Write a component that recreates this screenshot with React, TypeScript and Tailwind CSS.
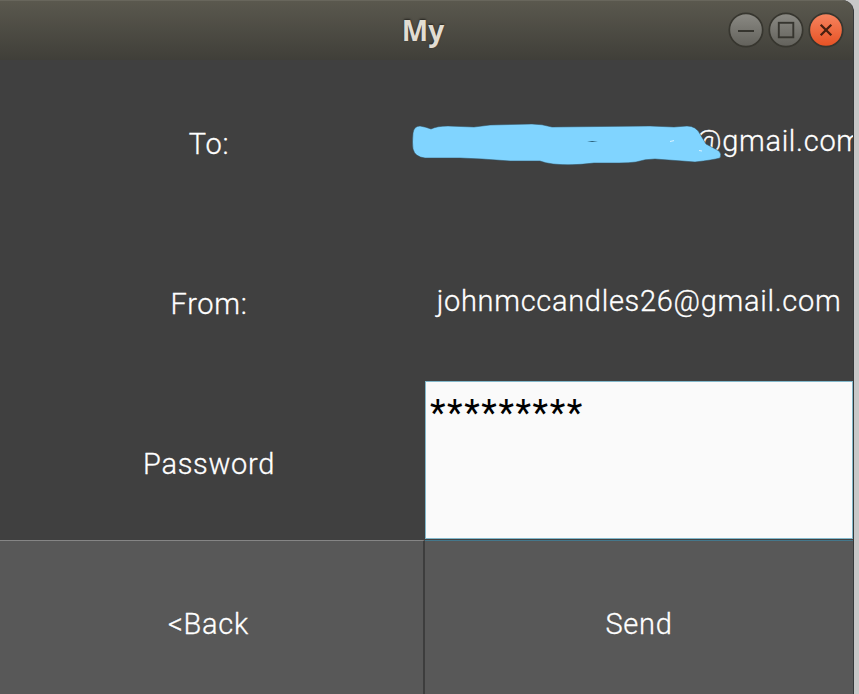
import React from "react";

function WindowButton({ kind }: { kind: "min" | "max" | "close" }) {
  const close = kind === "close";
  return (
    <svg className="h-9 w-9" viewBox="0 0 36 36" fill="none">
      <defs>
        <linearGradient id={kind} x1="0" y1="0" x2="0" y2="1">
          <stop stopColor={close ? "#f78560" : "#8b8a84"} />
          <stop offset="1" stopColor={close ? "#e65123" : "#62615b"} />
        </linearGradient>
      </defs>
      <circle cx="18" cy="18" r="16.7" fill={`url(#${kind})`} stroke="#37362f" strokeWidth="1.7" />
      {kind === "min" && <path d="M10 19H26" stroke="#36352f" strokeWidth="2" />}
      {kind === "max" && <rect x="10.8" y="10.8" width="14.5" height="14.5" stroke="#36352f" strokeWidth="1.9" />}
      {close && <path d="M12.7 12.7L23.3 23.3M23.3 12.7L12.7 23.3" stroke="#482010" strokeWidth="2.3" />}
    </svg>
  );
}

function Label({ children }: { children: React.ReactNode }) {
  return <div className="flex items-center justify-center pt-2.5 pr-[7px]">{children}</div>;
}

export default function App() {
  return (
    <div className="h-[694px] w-[859px] overflow-hidden bg-[#c8c8c8] font-['Roboto',sans-serif] text-[29px] font-light tracking-[0.7px] text-white">
      <div className="flex h-full w-[854px] flex-col overflow-hidden rounded-tr-[12px] border-r border-[#35393a] bg-[#404040]">
        <header className="grid h-[60px] shrink-0 grid-cols-[1fr_auto_1fr] items-center border-t border-[#68665c] bg-gradient-to-b from-[#5a584e] to-[#403f39] pr-[9px] pb-[2px]">
          <span />
          <h1 className="ml-[2px] font-['Noto_Sans',sans-serif] text-[28px] leading-9 font-bold tracking-normal text-[#e2ddd3] [text-shadow:0_-1px_2px_#25231f]">My</h1>
          <div className="flex justify-end gap-1">
            <WindowButton kind="min" />
            <WindowButton kind="max" />
            <WindowButton kind="close" />
          </div>
        </header>
        <main className="grid shrink-0 grid-cols-[425px_428px] grid-rows-[160px_160px_160px_154px] whitespace-nowrap [-webkit-text-stroke:0.3px]">
          <Label>To:</Label>
          <div className="relative flex items-center overflow-visible pt-[4px] pl-[270px]">
            @gmail.com
            <svg className="absolute top-[60px] -left-[17px] h-12 w-[320px]" viewBox="408 120 320 48">
              <path d="M413 133Q414 126 420 126Q426 127 431 129Q437 126 448 126L474 127L490 125L532 124Q542 124 552 127L650 126L674 127L687 126Q696 126 700 134L706 144L719 151Q722 154 720 158Q713 160 695 162L682 161L655 159Q645 159 636 162Q629 163 619 163L594 163Q571 166 553 164Q545 163 540 161L510 161L482 159L460 158L425 158Q415 157 413 149Q412 143 413 133Z" fill="#80d4ff" stroke="#314b58" strokeWidth=".5" />
              <path d="M587 141.6Q592 140.7 598 141.5Q592 142.2 587 141.6Z" fill="#275b75" />
              <path d="M670 141.5L674 140.6M699 150.5L702 151" stroke="#dcf4ff" strokeWidth="1" />
            </svg>
          </div>
          <Label>From:</Label>
          <div className="flex items-center justify-center pt-[4px]">johnmccandles26@gmail.com</div>
          <Label>Password</Label>
          <div className="mt-[1px] mb-[1px] border border-[#82b8cb] bg-[#fafafa] pt-[10px] pl-1 text-[36px] leading-[42px] font-normal tracking-[1.6px] text-black [-webkit-text-stroke:0]">*********</div>
          <button className="border-t border-r-2 border-t-[#858585] border-r-[#3d3d3d] bg-[#585858] pt-3.5 pr-1.5">&lt;Back</button>
          <button className="border-t border-[#44778b] bg-[#585858] pt-3.5">Send</button>
        </main>
      </div>
    </div>
  );
}
